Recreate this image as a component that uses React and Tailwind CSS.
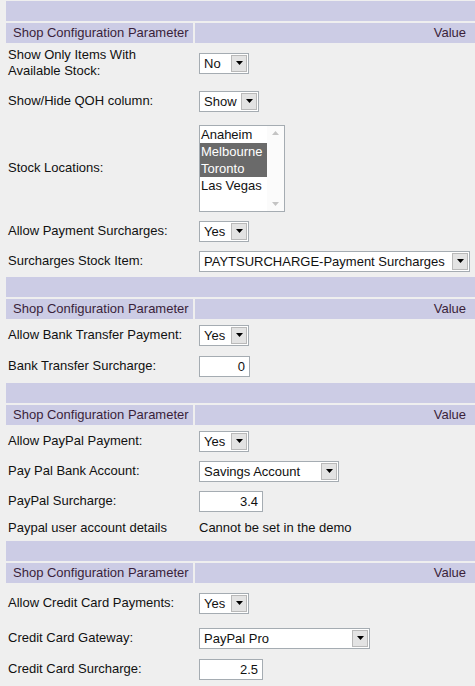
const font = { fontFamily: '"Liberation Sans", Arial, sans-serif' };

function Arrow({ color = "#000" }) {
    return (
        <svg width="7" height="4" viewBox="0 0 7 4">
            <path d="M0 0h7L3.5 4z" fill={color} />
        </svg>
    );
}

function Select({ value, width }) {
    return (
        <div className={`flex items-center h-[21px] border border-[#a5acb2] bg-white ${width}`}>
            <span className="flex-1 pl-[4px] leading-[19px] whitespace-nowrap overflow-hidden">{value}</span>
            <div className="w-[16px] h-[17px] mr-[1px] border border-[#b9b9b9] bg-[#e3e3e3] flex items-center justify-center">
                <Arrow />
            </div>
        </div>
    );
}

function Input({ value, width }) {
    return (
        <div className={`h-[21px] border border-[#a5acb2] bg-white text-right pr-[4px] leading-[19px] ${width}`}>
            {value}
        </div>
    );
}

function ListBox() {
    const opts = [
        { name: "Anaheim", sel: false },
        { name: "Melbourne", sel: true },
        { name: "Toronto", sel: true },
        { name: "Las Vegas", sel: false },
    ];
    return (
        <div className="flex w-[86px] h-[87px] border border-[#a5acb2] bg-white">
            <div className="flex-1 flex flex-col">
                {opts.map((o) => (
                    <div
                        key={o.name}
                        className={`h-[17px] leading-[17px] pl-[1px] whitespace-nowrap ${o.sel ? "bg-[#6a6a6a] text-white" : ""}`}
                    >
                        {o.name}
                    </div>
                ))}
            </div>
            <div className="w-[17px] flex flex-col justify-between items-center py-[5px] bg-[#fbfbfb]">
                <svg width="7" height="4" viewBox="0 0 7 4"><path d="M3.5 0L7 4H0z" fill="#c4c4c4" /></svg>
                <Arrow color="#c4c4c4" />
            </div>
        </div>
    );
}

function Row({ label, h, children }) {
    return (
        <div className={`flex items-center ${h}`}>
            <div className="w-[193px] pl-[2px] shrink-0 leading-[16px]">{label}</div>
            <div className="flex-1 flex">{children}</div>
        </div>
    );
}

function Section({ rows }) {
    return (
        <div className="flex flex-col gap-[2px]">
            <div className="h-[20px] bg-[#ccccE5]" />
            <div className="flex gap-[2px] h-[20px] text-[#3a1f3a] leading-[20px]">
                <div className="w-[187px] bg-[#ccccE5] pl-[7px]">Shop Configuration Parameter</div>
                <div className="flex-1 bg-[#ccccE5] text-right pr-[9px]">Value</div>
            </div>
            {rows}
        </div>
    );
}

export default function App() {
    return (
        <div className="w-[475px] h-[686px] overflow-hidden bg-[#efefef] text-[13px] text-[#111] pl-[6px] pt-[1px]" style={font}>
            <div className="flex flex-col gap-[2px]">
                <Section
                    rows={<>
                        <Row label={<>Show Only Items With<br />Available Stock:</>} h="h-[36px]"><Select value="No" width="w-[50px]" /></Row>
                        <Row label="Show/Hide QOH column:" h="h-[36px]"><Select value="Show" width="w-[60px]" /></Row>
                        <Row label="Stock Locations:" h="h-[94px]"><ListBox /></Row>
                        <Row label="Allow Payment Surcharges:" h="h-[28px]"><Select value="Yes" width="w-[50px]" /></Row>
                        <Row label="Surcharges Stock Item:" h="h-[28px]"><Select value="PAYTSURCHARGE-Payment Surcharges" width="w-[271px]" /></Row>
                    </>}
                />
                <Section
                    rows={<>
                        <Row label="Allow Bank Transfer Payment:" h="h-[28px]"><Select value="Yes" width="w-[50px]" /></Row>
                        <Row label="Bank Transfer Surcharge:" h="h-[30px]"><Input value="0" width="w-[51px]" /></Row>
                    </>}
                />
                <Section
                    rows={<>
                        <Row label="Allow PayPal Payment:" h="h-[28px]"><Select value="Yes" width="w-[50px]" /></Row>
                        <Row label="Pay Pal Bank Account:" h="h-[28px]"><Select value="Savings Account" width="w-[140px]" /></Row>
                        <Row label="PayPal Surcharge:" h="h-[28px]"><Input value="3.4" width="w-[64px]" /></Row>
                        <Row label="Paypal user account details" h="h-[22px]"><span>Cannot be set in the demo</span></Row>
                    </>}
                />
                <Section
                    rows={<>
                        <Row label="Allow Credit Card Payments:" h="h-[36px]"><Select value="Yes" width="w-[50px]" /></Row>
                        <Row label="Credit Card Gateway:" h="h-[30px]"><Select value="PayPal Pro" width="w-[171px]" /></Row>
                        <Row label="Credit Card Surcharge:" h="h-[28px]"><Input value="2.5" width="w-[64px]" /></Row>
                    </>}
                />
            </div>
        </div>
    );
}
